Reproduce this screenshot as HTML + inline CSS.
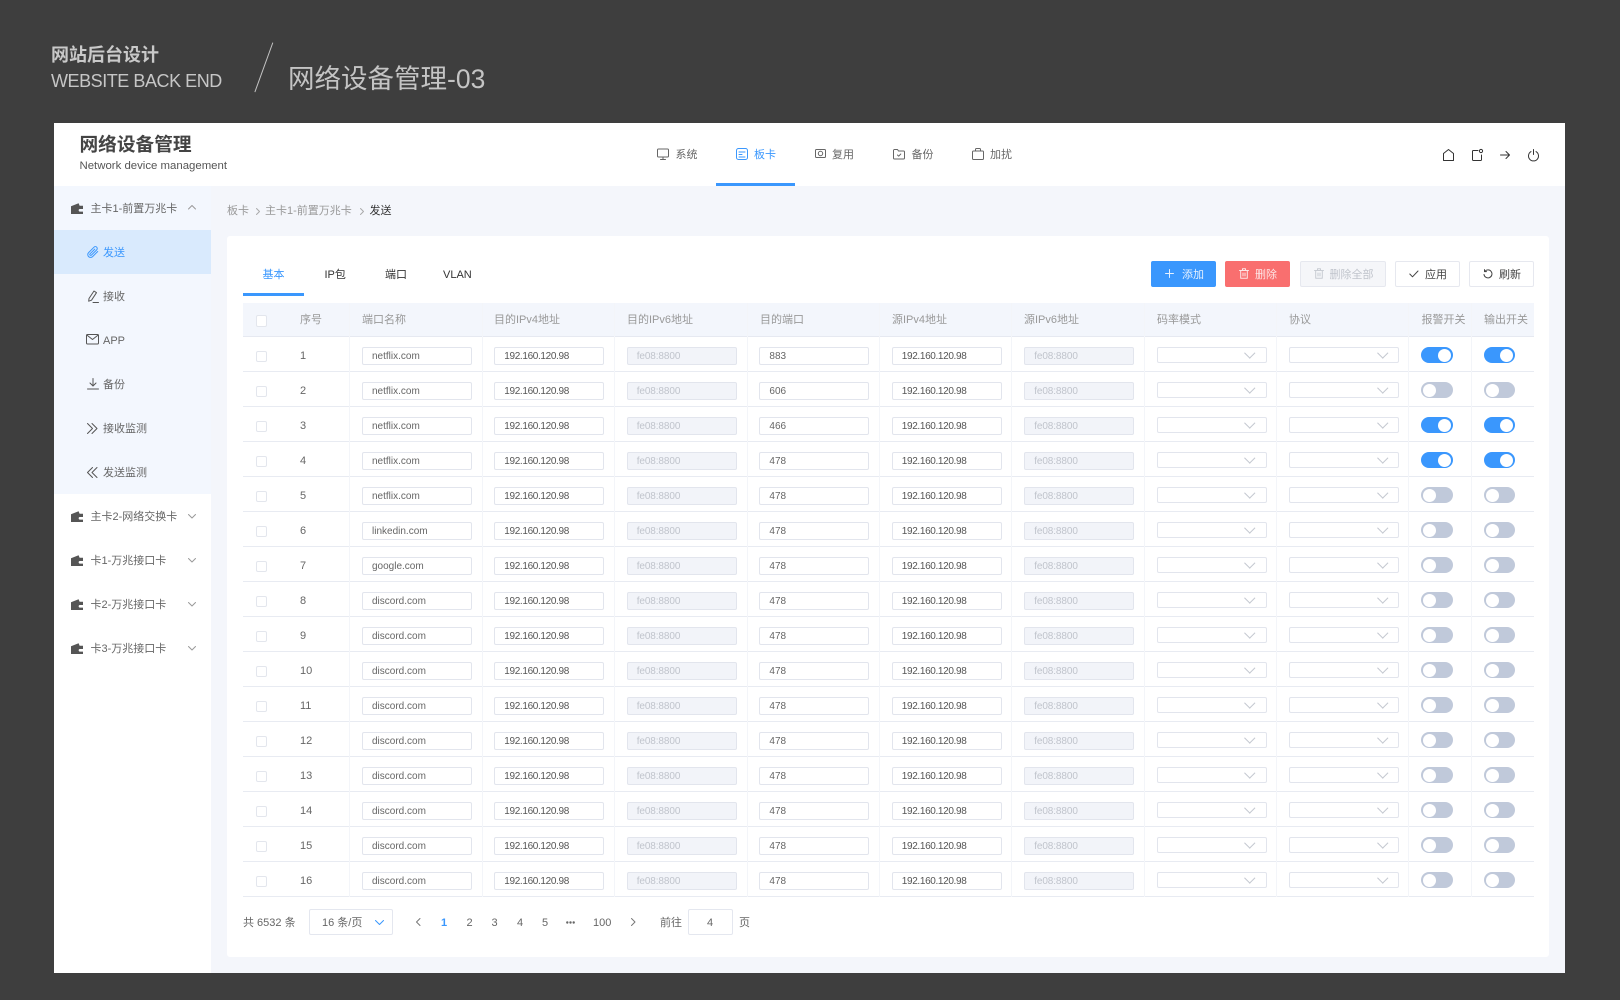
<!DOCTYPE html>
<html lang="zh"><head><meta charset="utf-8"><title>网络设备管理</title>
<style>
*{box-sizing:border-box;margin:0;padding:0}
html,body{width:1620px;height:1000px;overflow:hidden;background:#3e3e3e}
body{font-family:"Liberation Sans","Noto Sans CJK SC",sans-serif;font-size:11px;color:#666;position:relative}
.x{position:absolute;white-space:nowrap;line-height:16px;margin-top:1px}
svg{position:absolute;overflow:visible;fill:none;stroke-linecap:round;stroke-linejoin:round}
.bx{position:absolute}
.tb{position:absolute;left:243px;top:303px;width:1291px;height:34px;background:#f3f6fc;border-bottom:1px solid #e6e9f1}
.th{position:absolute;top:312px;line-height:16px;color:#999;white-space:nowrap}
.v{position:absolute;top:303px;height:594px;width:1px;background:#f3f5f9}
.r{position:absolute;left:243px;width:1291px;height:35px;border-bottom:1px solid #e8ebf2}
.r>*{position:absolute}
.ck{left:12.5px;top:14px;width:11px;height:11px;border:1px solid #e3e6ed;border-radius:2px;background:#fff}
.n{left:57px;top:11px;line-height:16px;font-size:11px;color:#666}
.in{top:10px;width:110px;height:18px;border:1px solid #e2e5ed;border-radius:2px;background:#fff;font-size:10px;line-height:17px;padding-left:9px;color:#666;white-space:nowrap}
.ip{letter-spacing:-.35px;color:#555}
.d{background:#f2f4f9;color:#c0c4cc;letter-spacing:-.1px}
.a{left:119px}.b{left:251.3px}.c{left:383.7px}.e{left:516.4px}.f{left:648.8px}.g{left:781.2px}
.s{padding:0;height:16px}.s::after{content:"";position:absolute;right:12px;top:.5px;width:6.5px;height:6.5px;border-right:1px solid #c4c8d0;border-bottom:1px solid #c4c8d0;transform:rotate(45deg)}
.h{left:913.6px}.j{left:1046px}
.t{top:10px;width:31.4px;height:16px;border-radius:8px;background:#c0c9da}
.t::after{content:"";position:absolute;left:2px;top:1.5px;width:13px;height:13px;border-radius:50%;background:#fff}
.on{background:#3a97fd}.on::after{left:16.5px}
.t1{left:1178.3px}.t2{left:1240.7px}
.btn{position:absolute;top:261px;height:26px;border-radius:2px;line-height:24px;white-space:nowrap;border:1px solid #e6e8ef;background:#fff;color:#444}
.btn span{position:absolute;top:1px}
</style></head><body>

<div class="x" style="left:51px;top:42px;font-size:18px;line-height:24px;font-weight:700;color:#c9c9c9">网站后台设计</div>
<div class="x" style="left:51px;top:68px;font-size:18px;line-height:24px;letter-spacing:-.45px;color:#c6c6c6">WEBSITE BACK END</div>
<svg style="left:0;top:0" width="1" height="1"><path d="M272.7 43L255 91.7" stroke="#c4c4c4" stroke-width="1"/></svg>
<div class="x" style="left:288px;top:59px;font-size:26.5px;line-height:38px;color:#c4c4c4">网络设备管理-03</div>

<div class="bx" style="left:54px;top:123px;width:1511px;height:850px;background:#f4f6fb"></div>
<div class="bx" style="left:54px;top:123px;width:1511px;height:63px;background:#fff"></div>
<div class="bx" style="left:54px;top:186px;width:157px;height:787px;background:#fff"></div>
<div class="bx" style="left:54px;top:186px;width:157px;height:308px;background:#f3f7fe"></div>
<div class="bx" style="left:54px;top:230px;width:157px;height:44px;background:#d9eafd"></div>

<div class="x" style="left:79.5px;top:130px;font-size:18.7px;line-height:28px;font-weight:700;color:#444">网络设备管理</div>
<div class="x" style="left:79.5px;top:157px;font-size:11.4px;color:#555">Network device management</div>

<svg style="left:657px;top:148px" width="12" height="12" stroke="#666"><rect x=".5" y="1" width="11" height="8" rx="1"/><path d="M6 9v2M3.5 11.5h5"/></svg>
<div class="x" style="left:675.5px;top:146px">系统</div>
<svg style="left:736px;top:148px" width="12" height="12" stroke="#3a97fd"><rect x=".5" y=".5" width="11" height="11" rx="2"/><path d="M3 4h6M3 6.5h3M3 9h6"/></svg>
<div class="x" style="left:754px;top:146px;color:#3a97fd">板卡</div>
<div class="bx" style="left:716px;top:183px;width:79px;height:3px;background:#3a97fd"></div>
<svg style="left:815px;top:149px" width="11" height="10" stroke="#666"><rect x=".5" y=".5" width="10" height="8" rx="1"/><circle cx="5.5" cy="4.5" r="2.2"/></svg>
<div class="x" style="left:832px;top:146px">复用</div>
<svg style="left:893px;top:148px" width="12" height="12" stroke="#666"><path d="M.5 2.5a1 1 0 0 1 1-1h3l1 1.500h5a1 1 0 0 1 1 1v6a1 1 0 0 1-1 1h-9a1 1 0 0 1-1-1z"/><path d="M4.500 7l1.200 1.200L7.800 6"/></svg>
<div class="x" style="left:911.5px;top:146px">备份</div>
<svg style="left:972px;top:148px" width="12" height="12" stroke="#666"><rect x=".5" y="3" width="11" height="8.5" rx="1"/><path d="M3.500 3V1.500a1 1 0 0 1 1-1h3a1 1 0 0 1 1 1V3"/></svg>
<div class="x" style="left:990px;top:146px">加扰</div>

<svg style="left:1443px;top:149px" width="11" height="12" stroke="#333"><path d="M.5 4.500L5.500.5l5 4v7h-10z"/></svg>
<svg style="left:1472px;top:149px" width="11" height="12" stroke="#333"><path d="M6 1.500H1.200a.7.7 0 0 0-.7.7v8.600c0 .4.3.7.7.7h7.600c.4 0 .7-.3.7-.7V6"/><circle cx="9" cy="2" r="1.600"/></svg>
<svg style="left:1500px;top:150px" width="10" height="10" stroke="#333"><path d="M.5 5h9M6 1.500L9.500 5 6 8.500"/></svg>
<svg style="left:1528px;top:149px" width="11" height="12" stroke="#333"><path d="M3 2.600a5 5 0 1 0 5 0M5.500.5v5"/></svg>

<svg width="0" height="0" style="left:0;top:0"><defs>
<symbol id="w" viewBox="0 0 12 11"><path d="M0 3.200L7.600.2 8.600 2.800H12V6H8.500a1.400 1.400 0 0 0 0 2.600H12V11H0z" fill="#555"/></symbol>
</defs></svg>

<svg style="left:71px;top:203px" width="12" height="11"><use href="#w"/></svg>
<div class="x" style="left:90.5px;top:200px">主卡1-前置万兆卡</div>
<svg style="left:187.5px;top:205px" width="8" height="4" stroke="#999"><path d="M.5 4L4 .5 7.500 4"/></svg>

<svg style="left:87px;top:246px" width="12" height="12" stroke="#3a97fd"><path d="M10.700 5.500L5.600 10.600a2.800 2.800 0 0 1-4-4l5.400-5.400a1.900 1.900 0 0 1 2.700 2.700L4.400 9.100a.9.9 0 0 1-1.300-1.300L7.800 3.100"/></svg>
<div class="x" style="left:103px;top:244px;color:#3a97fd">发送</div>
<svg style="left:87px;top:290px" width="12" height="13" stroke="#555"><path d="M2 8.500L7 1l2.500 1.700-5 7.500-2.800 1zM6 12.500h5.500"/></svg>
<div class="x" style="left:103px;top:288px">接收</div>
<svg style="left:86px;top:334px" width="13" height="11" stroke="#555"><rect x=".5" y=".5" width="12" height="9.500" rx="1"/><path d="M.8 1l5.700 4.500L12.200 1"/></svg>
<div class="x" style="left:103px;top:332px">APP</div>
<svg style="left:87px;top:378px" width="12" height="12" stroke="#555"><path d="M6 .5v7M3 5l3 3 3-3M.5 11h11"/></svg>
<div class="x" style="left:103px;top:376px">备份</div>
<svg style="left:87px;top:423px" width="11" height="11" stroke="#555"><path d="M.5.5l5 5-5 5M5 .5l5 5-5 5"/></svg>
<div class="x" style="left:103px;top:420px">接收监测</div>
<svg style="left:87px;top:467px" width="11" height="11" stroke="#555"><path d="M5.500.5l-5 5 5 5M10 .5l-5 5 5 5"/></svg>
<div class="x" style="left:103px;top:464px">发送监测</div>

<svg style="left:71px;top:511px" width="12" height="11"><use href="#w"/></svg>
<div class="x" style="left:90.5px;top:508px">主卡2-网络交换卡</div>
<svg style="left:187.5px;top:514px" width="8" height="4" stroke="#999"><path d="M.5.5L4 4 7.500.5"/></svg>
<svg style="left:71px;top:555px" width="12" height="11"><use href="#w"/></svg>
<div class="x" style="left:90.5px;top:552px">卡1-万兆接口卡</div>
<svg style="left:187.5px;top:558px" width="8" height="4" stroke="#999"><path d="M.5.5L4 4 7.500.5"/></svg>
<svg style="left:71px;top:599px" width="12" height="11"><use href="#w"/></svg>
<div class="x" style="left:90.5px;top:596px">卡2-万兆接口卡</div>
<svg style="left:187.5px;top:602px" width="8" height="4" stroke="#999"><path d="M.5.5L4 4 7.500.5"/></svg>
<svg style="left:71px;top:643px" width="12" height="11"><use href="#w"/></svg>
<div class="x" style="left:90.5px;top:640px">卡3-万兆接口卡</div>
<svg style="left:187.5px;top:646px" width="8" height="4" stroke="#999"><path d="M.5.5L4 4 7.500.5"/></svg>

<div class="x" style="left:227px;top:202px;color:#999">板卡</div>
<svg style="left:255.5px;top:208px" width="4" height="7" stroke="#aaa"><path d="M.5.5l3 3-3 3"/></svg>
<div class="x" style="left:265px;top:202px;color:#999">主卡1-前置万兆卡</div>
<svg style="left:360px;top:208px" width="4" height="7" stroke="#aaa"><path d="M.5.5l3 3-3 3"/></svg>
<div class="x" style="left:369.5px;top:202px;color:#333">发送</div>

<div class="bx" style="left:227px;top:236px;width:1322px;height:721px;background:#fff;border-radius:3px"></div>

<div class="x" style="left:262.5px;top:266px;color:#3a97fd">基本</div>
<div class="x" style="left:324.5px;top:266px;color:#333">IP包</div>
<div class="x" style="left:385px;top:266px;color:#333">端口</div>
<div class="x" style="left:443px;top:266px;color:#333">VLAN</div>
<div class="bx" style="left:243px;top:293px;width:61px;height:3px;background:#3a97fd"></div>

<div class="btn" style="left:1151px;width:65px;background:#3a97fd;border-color:#3a97fd;color:#e6f1ff"><span style="left:30px">添加</span><svg style="left:13px;top:7px" width="9" height="9" stroke="#e6f1ff"><path d="M4.500.5v8M.5 4.500h8"/></svg></div>
<div class="btn" style="left:1225px;width:65px;background:#f96f6f;border-color:#f96f6f;color:#fde6e6"><span style="left:29px">删除</span><svg style="left:13px;top:6px" width="10" height="11" stroke="#fde6e6"><path d="M.5 2.500h9M3.500 2.500V.8h3v1.700M1.700 2.500v7.700h6.600V2.500M4 5v3M6 5v3"/></svg></div>
<div class="btn" style="left:1299.5px;width:86px;background:#f5f6f9;color:#c0c4cc"><span style="left:29px">删除全部</span><svg style="left:13px;top:6px" width="10" height="11" stroke="#c8ccd3"><path d="M.5 2.500h9M3.500 2.500V.8h3v1.700M1.700 2.500v7.700h6.600V2.500M4 5v3M6 5v3"/></svg></div>
<div class="btn" style="left:1395px;width:65px"><span style="left:29px">应用</span><svg style="left:13px;top:8px" width="10" height="8" stroke="#444"><path d="M.8 4l2.700 2.800L9 1"/></svg></div>
<div class="btn" style="left:1469px;width:65px"><span style="left:29px">刷新</span><svg style="left:13px;top:7px" width="10" height="10" stroke="#444"><path d="M2 2.200A4 4 0 1 1 1 5.500M1.500.6v2h2"/></svg></div>

<div class="tb"></div>
<div class="bx" style="left:255.5px;top:315px;width:11.5px;height:11.5px;border:1px solid #e3e6ed;border-radius:2px;background:#fff"></div>
<div class="th" style="left:300px">序号</div>
<div class="th" style="left:362px">端口名称</div>
<div class="th" style="left:494px">目的IPv4地址</div>
<div class="th" style="left:627px">目的IPv6地址</div>
<div class="th" style="left:760px">目的端口</div>
<div class="th" style="left:892px">源IPv4地址</div>
<div class="th" style="left:1024px">源IPv6地址</div>
<div class="th" style="left:1157px">码率模式</div>
<div class="th" style="left:1289px">协议</div>
<div class="th" style="left:1421.5px">报警开关</div>
<div class="th" style="left:1484px">输出开关</div>

<div class="r" style="top:337px"><i class="ck"></i><span class="n">1</span><div class="in a">netflix.com</div><div class="in b ip">192.160.120.98</div><div class="in c d">fe08:8800</div><div class="in e">883</div><div class="in f ip">192.160.120.98</div><div class="in g d">fe08:8800</div><div class="in h s"></div><div class="in j s"></div><i class="t t1 on"></i><i class="t t2 on"></i></div>
<div class="r" style="top:372px"><i class="ck"></i><span class="n">2</span><div class="in a">netflix.com</div><div class="in b ip">192.160.120.98</div><div class="in c d">fe08:8800</div><div class="in e">606</div><div class="in f ip">192.160.120.98</div><div class="in g d">fe08:8800</div><div class="in h s"></div><div class="in j s"></div><i class="t t1"></i><i class="t t2"></i></div>
<div class="r" style="top:407px"><i class="ck"></i><span class="n">3</span><div class="in a">netflix.com</div><div class="in b ip">192.160.120.98</div><div class="in c d">fe08:8800</div><div class="in e">466</div><div class="in f ip">192.160.120.98</div><div class="in g d">fe08:8800</div><div class="in h s"></div><div class="in j s"></div><i class="t t1 on"></i><i class="t t2 on"></i></div>
<div class="r" style="top:442px"><i class="ck"></i><span class="n">4</span><div class="in a">netflix.com</div><div class="in b ip">192.160.120.98</div><div class="in c d">fe08:8800</div><div class="in e">478</div><div class="in f ip">192.160.120.98</div><div class="in g d">fe08:8800</div><div class="in h s"></div><div class="in j s"></div><i class="t t1 on"></i><i class="t t2 on"></i></div>
<div class="r" style="top:477px"><i class="ck"></i><span class="n">5</span><div class="in a">netflix.com</div><div class="in b ip">192.160.120.98</div><div class="in c d">fe08:8800</div><div class="in e">478</div><div class="in f ip">192.160.120.98</div><div class="in g d">fe08:8800</div><div class="in h s"></div><div class="in j s"></div><i class="t t1"></i><i class="t t2"></i></div>
<div class="r" style="top:512px"><i class="ck"></i><span class="n">6</span><div class="in a">linkedin.com</div><div class="in b ip">192.160.120.98</div><div class="in c d">fe08:8800</div><div class="in e">478</div><div class="in f ip">192.160.120.98</div><div class="in g d">fe08:8800</div><div class="in h s"></div><div class="in j s"></div><i class="t t1"></i><i class="t t2"></i></div>
<div class="r" style="top:547px"><i class="ck"></i><span class="n">7</span><div class="in a">google.com</div><div class="in b ip">192.160.120.98</div><div class="in c d">fe08:8800</div><div class="in e">478</div><div class="in f ip">192.160.120.98</div><div class="in g d">fe08:8800</div><div class="in h s"></div><div class="in j s"></div><i class="t t1"></i><i class="t t2"></i></div>
<div class="r" style="top:582px"><i class="ck"></i><span class="n">8</span><div class="in a">discord.com</div><div class="in b ip">192.160.120.98</div><div class="in c d">fe08:8800</div><div class="in e">478</div><div class="in f ip">192.160.120.98</div><div class="in g d">fe08:8800</div><div class="in h s"></div><div class="in j s"></div><i class="t t1"></i><i class="t t2"></i></div>
<div class="r" style="top:617px"><i class="ck"></i><span class="n">9</span><div class="in a">discord.com</div><div class="in b ip">192.160.120.98</div><div class="in c d">fe08:8800</div><div class="in e">478</div><div class="in f ip">192.160.120.98</div><div class="in g d">fe08:8800</div><div class="in h s"></div><div class="in j s"></div><i class="t t1"></i><i class="t t2"></i></div>
<div class="r" style="top:652px"><i class="ck"></i><span class="n">10</span><div class="in a">discord.com</div><div class="in b ip">192.160.120.98</div><div class="in c d">fe08:8800</div><div class="in e">478</div><div class="in f ip">192.160.120.98</div><div class="in g d">fe08:8800</div><div class="in h s"></div><div class="in j s"></div><i class="t t1"></i><i class="t t2"></i></div>
<div class="r" style="top:687px"><i class="ck"></i><span class="n">11</span><div class="in a">discord.com</div><div class="in b ip">192.160.120.98</div><div class="in c d">fe08:8800</div><div class="in e">478</div><div class="in f ip">192.160.120.98</div><div class="in g d">fe08:8800</div><div class="in h s"></div><div class="in j s"></div><i class="t t1"></i><i class="t t2"></i></div>
<div class="r" style="top:722px"><i class="ck"></i><span class="n">12</span><div class="in a">discord.com</div><div class="in b ip">192.160.120.98</div><div class="in c d">fe08:8800</div><div class="in e">478</div><div class="in f ip">192.160.120.98</div><div class="in g d">fe08:8800</div><div class="in h s"></div><div class="in j s"></div><i class="t t1"></i><i class="t t2"></i></div>
<div class="r" style="top:757px"><i class="ck"></i><span class="n">13</span><div class="in a">discord.com</div><div class="in b ip">192.160.120.98</div><div class="in c d">fe08:8800</div><div class="in e">478</div><div class="in f ip">192.160.120.98</div><div class="in g d">fe08:8800</div><div class="in h s"></div><div class="in j s"></div><i class="t t1"></i><i class="t t2"></i></div>
<div class="r" style="top:792px"><i class="ck"></i><span class="n">14</span><div class="in a">discord.com</div><div class="in b ip">192.160.120.98</div><div class="in c d">fe08:8800</div><div class="in e">478</div><div class="in f ip">192.160.120.98</div><div class="in g d">fe08:8800</div><div class="in h s"></div><div class="in j s"></div><i class="t t1"></i><i class="t t2"></i></div>
<div class="r" style="top:827px"><i class="ck"></i><span class="n">15</span><div class="in a">discord.com</div><div class="in b ip">192.160.120.98</div><div class="in c d">fe08:8800</div><div class="in e">478</div><div class="in f ip">192.160.120.98</div><div class="in g d">fe08:8800</div><div class="in h s"></div><div class="in j s"></div><i class="t t1"></i><i class="t t2"></i></div>
<div class="r" style="top:862px"><i class="ck"></i><span class="n">16</span><div class="in a">discord.com</div><div class="in b ip">192.160.120.98</div><div class="in c d">fe08:8800</div><div class="in e">478</div><div class="in f ip">192.160.120.98</div><div class="in g d">fe08:8800</div><div class="in h s"></div><div class="in j s"></div><i class="t t1"></i><i class="t t2"></i></div>

<i class="v" style="left:349px"></i><i class="v" style="left:481.5px"></i><i class="v" style="left:614px"></i><i class="v" style="left:746.5px"></i><i class="v" style="left:879px"></i><i class="v" style="left:1011px"></i><i class="v" style="left:1144px"></i><i class="v" style="left:1276px"></i><i class="v" style="left:1408px"></i><i class="v" style="left:1470.5px"></i>

<div class="x" style="left:243px;top:914px">共 6532 条</div>
<div class="bx" style="left:309px;top:909px;width:84px;height:26px;border:1px solid #e4e7ef;border-radius:2px"></div>
<div class="x" style="left:322px;top:914px">16 条/页</div>
<svg style="left:374.5px;top:920px" width="9" height="5" stroke="#3a97fd"><path d="M.5.5l4 4 4-4"/></svg>
<svg style="left:416px;top:918px" width="5" height="8" stroke="#777"><path d="M4 .5L.5 4 4 7.500"/></svg>
<div class="x" style="left:441px;top:914px;color:#3a97fd;font-weight:700">1</div>
<div class="x" style="left:466.5px;top:914px">2</div>
<div class="x" style="left:491.5px;top:914px">3</div>
<div class="x" style="left:517px;top:914px">4</div>
<div class="x" style="left:542px;top:914px">5</div>
<svg style="left:565.5px;top:921px" width="9" height="3"><circle cx="1.3" cy="1.5" r="1.2" fill="#666"/><circle cx="4.500" cy="1.5" r="1.2" fill="#666"/><circle cx="7.7" cy="1.5" r="1.2" fill="#666"/></svg>
<div class="x" style="left:593px;top:914px">100</div>
<svg style="left:631px;top:918px" width="5" height="8" stroke="#777"><path d="M.5.5L4 4 .5 7.500"/></svg>
<div class="x" style="left:660px;top:914px">前往</div>
<div class="bx" style="left:688px;top:909px;width:45px;height:26px;border:1px solid #e4e7ef;border-radius:2px"></div>
<div class="x" style="left:707px;top:914px">4</div>
<div class="x" style="left:739px;top:914px">页</div>

</body></html>
